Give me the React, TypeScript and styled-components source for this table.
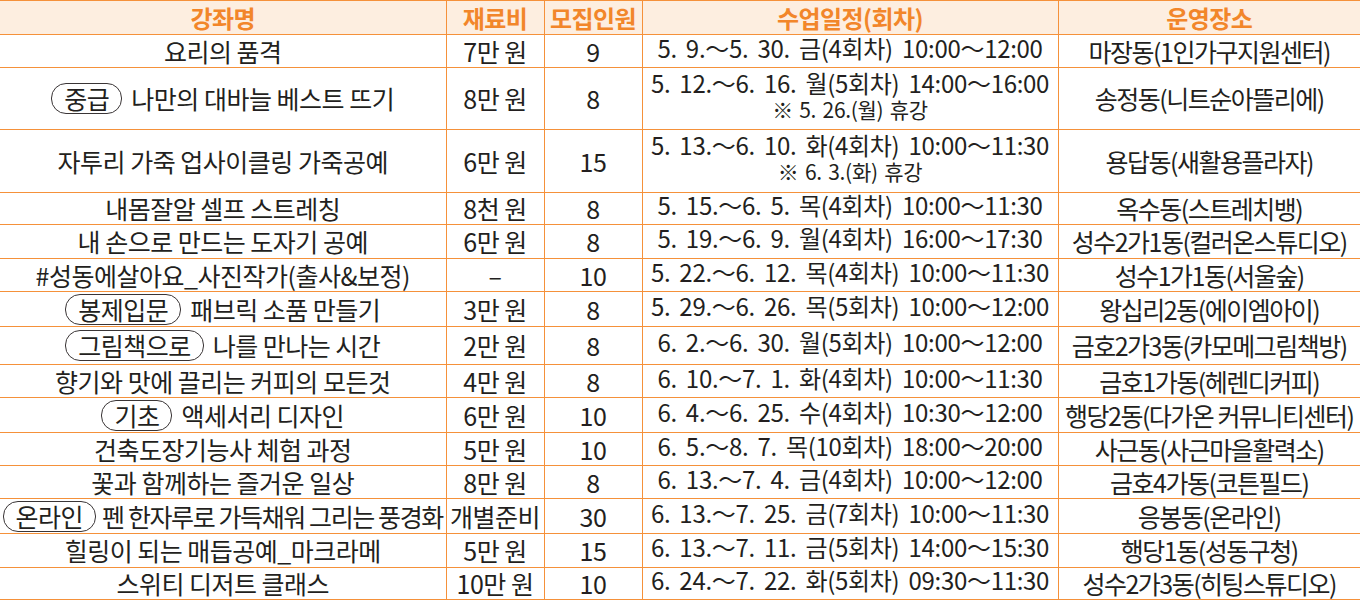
import React from "react";
import styled, { createGlobalStyle } from "styled-components";

type Course = {
  badge?: string;
  title: string;
  squeeze?: boolean;
  fee: string;
  seats: string;
  schedule: string;
  note?: string;
  place: string;
  height: number;
};

const courses: Course[] = [
  { title: "요리의 품격", fee: "7만 원", seats: "9", schedule: "5. 9.～5. 30. 금(4회차) 10:00～12:00", place: "마장동(1인가구지원센터)", height: 33 },
  { badge: "중급", title: "나만의 대바늘 베스트 뜨기", fee: "8만 원", seats: "8", schedule: "5. 12.～6. 16. 월(5회차) 14:00～16:00", note: "※ 5. 26.(월) 휴강", place: "송정동(니트순아뜰리에)", height: 62 },
  { title: "자투리 가죽 업사이클링 가죽공예", fee: "6만 원", seats: "15", schedule: "5. 13.～6. 10. 화(4회차) 10:00～11:30", note: "※ 6. 3.(화) 휴강", place: "용답동(새활용플라자)", height: 63 },
  { title: "내몸잘알 셀프 스트레칭", fee: "8천 원", seats: "8", schedule: "5. 15.～6. 5. 목(4회차) 10:00～11:30", place: "옥수동(스트레치뱅)", height: 32 },
  { title: "내 손으로 만드는 도자기 공예", fee: "6만 원", seats: "8", schedule: "5. 19.～6. 9. 월(4회차) 16:00～17:30", place: "성수2가1동(컬러온스튜디오)", height: 34 },
  { title: "#성동에살아요_사진작가(출사&보정)", fee: "–", seats: "10", schedule: "5. 22.～6. 12. 목(4회차) 10:00～11:30", place: "성수1가1동(서울숲)", height: 33 },
  { badge: "봉제입문", title: "패브릭 소품 만들기", fee: "3만 원", seats: "8", schedule: "5. 29.～6. 26. 목(5회차) 10:00～12:00", place: "왕십리2동(에이엠아이)", height: 35 },
  { badge: "그림책으로", title: "나를 만나는 시간", fee: "2만 원", seats: "8", schedule: "6. 2.～6. 30. 월(5회차) 10:00～12:00", place: "금호2가3동(카모메그림책방)", height: 38 },
  { title: "향기와 맛에 끌리는 커피의 모든것", fee: "4만 원", seats: "8", schedule: "6. 10.～7. 1. 화(4회차) 10:00～11:30", place: "금호1가동(헤렌디커피)", height: 33 },
  { badge: "기초", title: "액세서리 디자인", fee: "6만 원", seats: "10", schedule: "6. 4.～6. 25. 수(4회차) 10:30～12:00", place: "행당2동(다가온 커뮤니티센터)", height: 35 },
  { title: "건축도장기능사 체험 과정", fee: "5만 원", seats: "10", schedule: "6. 5.～8. 7. 목(10회차) 18:00～20:00", place: "사근동(사근마을활력소)", height: 33 },
  { title: "꽃과 함께하는 즐거운 일상", fee: "8만 원", seats: "8", schedule: "6. 13.～7. 4. 금(4회차) 10:00～12:00", place: "금호4가동(코튼필드)", height: 33 },
  { badge: "온라인", title: "펜 한자루로 가득채워 그리는 풍경화", squeeze: true, fee: "개별준비", seats: "30", schedule: "6. 13.～7. 25. 금(7회차) 10:00～11:30", place: "응봉동(온라인)", height: 35 },
  { title: "힐링이 되는 매듭공예_마크라메", fee: "5만 원", seats: "15", schedule: "6. 13.～7. 11. 금(5회차) 14:00～15:30", place: "행당1동(성동구청)", height: 34 },
  { title: "스위티 디저트 클래스", fee: "10만 원", seats: "10", schedule: "6. 24.～7. 22. 화(5회차) 09:30～11:30", place: "성수2가3동(히팅스튜디오)", height: 32 },
];

const GlobalStyle = createGlobalStyle`
  html, body {
    margin: 0;
    padding: 0;
    background: #ffffff;
  }
  body {
    font-family: "Noto Sans CJK KR", "Noto Sans", sans-serif;
    color: #231f20;
  }
`;

const Table = styled.table`
  width: 1360px;
  table-layout: fixed;
  border-collapse: collapse;
  border-top: 1px solid #f5913a;
  border-bottom: 1px solid #f5913a;
`;

const HeadCell = styled.th`
  height: 33px;
  padding: 0;
  background: #fdeee0;
  color: #f2862a;
  font-size: 24px;
  font-weight: 700;
  line-height: 1;
  letter-spacing: -0.6px;
  text-align: center;
  border: 1px solid #f5913a;
  border-top: none;

  &:first-child {
    border-left: none;
  }
  &:last-child {
    border-right: none;
  }
`;

const Cell = styled.td<{ $tight?: boolean }>`
  padding: 0;
  font-size: 25px;
  font-weight: 400;
  line-height: 1;
  letter-spacing: ${(p) => (p.$tight ? "-1.5px" : "-0.5px")};
  text-align: center;
  vertical-align: middle;
  white-space: nowrap;
  border: 1px solid #f5913a;

  &:first-child {
    border-left: none;
  }
  &:last-child {
    border-right: none;
  }
`;

const Title = styled.span<{ $squeeze?: boolean }>`
  display: inline-flex;
  align-items: center;
  gap: ${(p) => (p.$squeeze ? "6px" : "9px")};
  letter-spacing: ${(p) => (p.$squeeze ? "-1.4px" : "-0.5px")};
`;

const Badge = styled.span`
  display: inline-flex;
  align-items: center;
  height: 29px;
  padding: 0 12px;
  border: 1px solid #3a3536;
  border-radius: 15px;
  letter-spacing: -0.5px;
`;

const Schedule = styled.div`
  display: flex;
  flex-direction: column;
  align-items: center;
  gap: 4px;
  padding-bottom: 7px;
  font-size: 24px;
  line-height: 1;
  letter-spacing: -0.3px;
  word-spacing: 4px;
`;

const Note = styled.span`
  font-size: 21px;
  word-spacing: 2px;
`;

export default function App() {
  return (
    <>
      <GlobalStyle />
      <Table>
        <colgroup>
          <col style={{ width: 446 }} />
          <col style={{ width: 98 }} />
          <col style={{ width: 98 }} />
          <col style={{ width: 416 }} />
          <col style={{ width: 302 }} />
        </colgroup>
        <thead>
          <tr>
            <HeadCell>강좌명</HeadCell>
            <HeadCell>재료비</HeadCell>
            <HeadCell>모집인원</HeadCell>
            <HeadCell>수업일정(회차)</HeadCell>
            <HeadCell>운영장소</HeadCell>
          </tr>
        </thead>
        <tbody>
          {courses.map((c) => (
            <tr key={c.title} style={{ height: c.height }}>
              <Cell>
                <Title $squeeze={c.squeeze}>
                  {c.badge && <Badge>{c.badge}</Badge>}
                  {c.title}
                </Title>
              </Cell>
              <Cell>{c.fee}</Cell>
              <Cell>{c.seats}</Cell>
              <Cell>
                <Schedule>
                  <span>{c.schedule}</span>
                  {c.note && <Note>{c.note}</Note>}
                </Schedule>
              </Cell>
              <Cell $tight>{c.place}</Cell>
            </tr>
          ))}
        </tbody>
      </Table>
    </>
  );
}
